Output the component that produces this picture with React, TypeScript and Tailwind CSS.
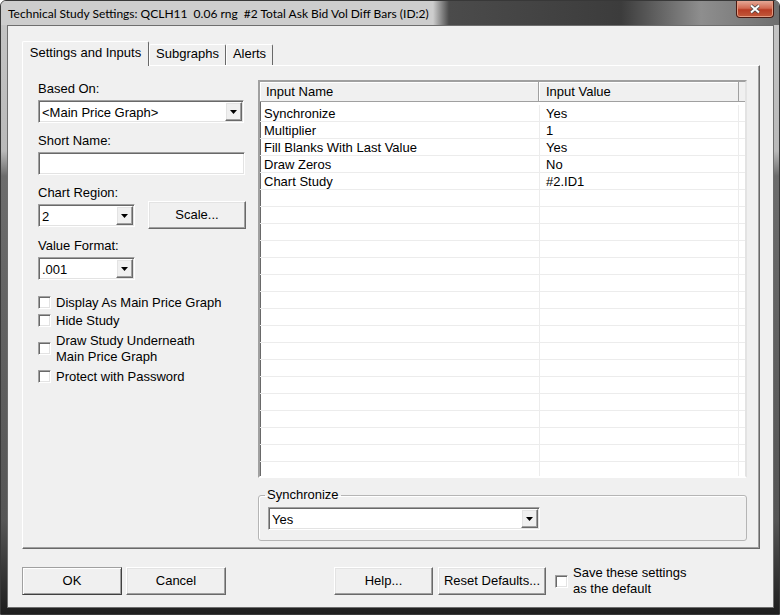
import React from 'react'

// Win classic 3D edges
const sunken =
  'border border-t-[#a0a0a0] border-l-[#a0a0a0] border-b-white border-r-white shadow-[inset_1px_1px_0_#696969,inset_-1px_-1px_0_#e3e3e3]'
const raised =
  'border border-t-white border-l-white border-b-[#696969] border-r-[#696969] shadow-[inset_-1px_-1px_0_#a0a0a0,inset_1px_1px_0_#e3e3e3]'

const rows: [string, string][] = [
  ['Synchronize', 'Yes'],
  ['Multiplier', '1'],
  ['Fill Blanks With Last Value', 'Yes'],
  ['Draw Zeros', 'No'],
  ['Chart Study', '#2.ID1'],
  ...Array.from({ length: 17 }, () => ['', ''] as [string, string]),
]

function Arrow() {
  return (
    <svg width="7" height="4" viewBox="0 0 7 4">
      <path d="M0 0h7L3.5 4z" fill="#000" />
    </svg>
  )
}

function Combo({ value, className }: { value: string; className: string }) {
  return (
    <div className={`flex h-[23px] bg-white p-px ${sunken} ${className}`}>
      <span className="flex-1 pl-[2px] pt-px leading-[19px] whitespace-nowrap">{value}</span>
      <span className={`flex w-[17px] items-center justify-center bg-[#f0f0f0] ${raised}`}>
        <Arrow />
      </span>
    </div>
  )
}

function Check() {
  return <span className={`block h-[13px] w-[13px] shrink-0 bg-white ${sunken}`} />
}

function CheckItem({ children, className }: { children: React.ReactNode; className: string }) {
  return (
    <div className={`flex items-center gap-[5px] leading-[16px] ${className}`}>
      <Check />
      <span className="pt-px">{children}</span>
    </div>
  )
}

function Button({ label, className }: { label: string; className: string }) {
  return (
    <div className={`flex h-[28px] items-center justify-center bg-[#f0f0f0] ${raised} ${className}`}>
      {label}
    </div>
  )
}

export default function App() {
  return (
    <div className="h-[615px] w-[780px] overflow-hidden rounded-t-[6px] border border-[#383838] bg-[linear-gradient(to_bottom,#c6c6c6_0px,#b9b9b9_150px,#6c6c6c_175px,#555555_520px,#1e1e1e_613px)] font-['Liberation_Sans',Arial,sans-serif] text-[13px] text-black">
      {/* title bar */}
      <div className="flex h-[24px] bg-[linear-gradient(to_right,#cdcdcd_0px,#cdcdcd_432px,#4b4b4b_448px,#3c3c3c_620px,#8e8e8e_700px,#6e6e6e_780px)]">
        <span className="flex-1 whitespace-pre pl-[7px] pt-[5px] font-['Lato','Noto_Sans',sans-serif] text-[12px] leading-[16px]">
          Technical Study Settings: QCLH11  0.06 rng  #2 Total Ask Bid Vol Diff Bars (ID:2)
        </span>
        <div className="mr-[5px] flex h-[17px] w-[38px] items-center justify-center rounded-b-[4px] border border-t-0 border-[#4a1a12] bg-[linear-gradient(to_bottom,#e6a896_0%,#d26a52_45%,#b83c24_55%,#c25a3c_100%)] shadow-[inset_0_-1px_0_#e49a80,inset_1px_0_0_#e49a80,inset_-1px_0_0_#e49a80]">
          <svg width="12" height="10" viewBox="0 0 12 10">
            <path d="M2 1.5 10 8.5M10 1.5 2 8.5" stroke="#4a4a4a" strokeWidth="3.6" />
            <path d="M2 1.5 10 8.5M10 1.5 2 8.5" stroke="#fff" strokeWidth="2" />
          </svg>
        </div>
      </div>

      {/* client area */}
      <div className="ml-[6px] h-[583px] w-[767px] border border-[#6e6e6e] bg-[#f0f0f0] pl-[14px] pt-[15px]">
        {/* tabs */}
        <div className="flex h-[24px] items-end">
          <div className="relative z-10 -mb-px flex h-[25px] w-[127px] justify-center rounded-t-[2px] border border-b-0 border-t-white border-l-white border-r-[#696969] bg-[#f0f0f0] pt-[3px] leading-[16px]">
            Settings and Inputs
          </div>
          <div className="flex h-[21px] w-[77px] justify-center rounded-t-[2px] border border-b-0 border-t-white border-l-white border-r-[#696969] bg-[#f0f0f0] pt-[1px] leading-[16px]">
            Subgraphs
          </div>
          <div className="flex h-[21px] w-[47px] justify-center rounded-t-[2px] border border-b-0 border-t-white border-l-white border-r-[#696969] bg-[#f0f0f0] pt-[1px] leading-[16px]">
            Alerts
          </div>
        </div>

        {/* tab panel */}
        <div className="flex h-[484px] w-[738px] gap-[12px] border border-t-white border-l-white border-b-[#696969] border-r-[#696969] pl-[15px] pt-[14px] shadow-[inset_-1px_-1px_0_#a0a0a0]">
          {/* left column */}
          <div className="flex w-[208px] flex-col leading-[16px]">
            <div className="pt-px">Based On:</div>
            <Combo value="<Main Price Graph>" className="mt-[3px] w-[206px]" />
            <div className="mt-[9px] pt-px">Short Name:</div>
            <div className={`mt-[3px] h-[23px] w-[207px] bg-white ${sunken}`} />
            <div className="mt-[9px] pt-px">Chart Region:</div>
            <div className="flex items-start">
              <Combo value="2" className="mt-[3px] w-[97px]" />
              <Button label="Scale..." className="ml-[13px] w-[98px]" />
            </div>
            <div className="mt-[8px] pt-px">Value Format:</div>
            <Combo value=".001" className="mt-[3px] w-[97px]" />
            <CheckItem className="mt-[14px]">Display As Main Price Graph</CheckItem>
            <CheckItem className="mt-[1px]">Hide Study</CheckItem>
            <CheckItem className="mt-[3px]">
              Draw Study Underneath
              <br />
              Main Price Graph
            </CheckItem>
            <CheckItem className="mt-[3px]">Protect with Password</CheckItem>
          </div>

          {/* right column */}
          <div className="flex w-[489px] flex-col">
            <div className="h-[398px] overflow-hidden border-2 border-t-[#a0a0a0] border-l-[#a0a0a0] border-b-white border-r-[#e3e3e3] bg-white shadow-[inset_1px_1px_0_#696969]">
              <div className="flex h-[20px] leading-[20px]">
                <div className="w-[279px] border-r border-b border-[#a0a0a0] bg-[#f0f0f0] pl-[6px] shadow-[inset_1px_1px_0_#fff]">
                  Input Name
                </div>
                <div className="w-[200px] border-r border-b border-[#a0a0a0] bg-[#f0f0f0] pl-[7px] shadow-[inset_1px_1px_0_#fff]">
                  Input Value
                </div>
                <div className="flex-1 border-b border-[#a0a0a0] bg-[#f0f0f0]" />
              </div>
              <div className="pt-[3px]">
                {rows.map(([name, value], i) => (
                  <div key={i} className="flex h-[17px] border-b border-[#ececec] leading-[17px]">
                    <div className="w-[280px] border-r border-[#ececec] pl-[4px] whitespace-nowrap">{name}</div>
                    <div className="w-[199px] border-r border-[#ececec] pl-[6px]">{value}</div>
                    <div className="flex-1" />
                  </div>
                ))}
              </div>
            </div>

            <fieldset className="mt-[9px] rounded-[3px] border border-[#b5b5b5] pb-[10px] shadow-[inset_1px_1px_0_#fff]">
              <legend className="ml-[6px] px-[2px] leading-[16px]">Synchronize</legend>
              <Combo value="Yes" className="ml-[9px] mt-[4px] w-[272px]" />
            </fieldset>
          </div>
        </div>

        {/* bottom buttons */}
        <div className="mt-[16px] flex items-center">
          <div className="flex h-[28px] w-[100px] items-center justify-center border border-t-[#a0a0a0] border-l-[#a0a0a0] border-b-[#404040] border-r-[#404040] bg-[#f0f0f0] shadow-[inset_1px_1px_0_#fff,inset_-1px_-1px_0_#a0a0a0]">
            OK
          </div>
          <Button label="Cancel" className="ml-[4px] w-[100px]" />
          <Button label="Help..." className="ml-[108px] w-[99px]" />
          <Button label="Reset Defaults..." className="ml-[5px] w-[108px]" />
          <div className="ml-[9px] flex items-center gap-[5px] leading-[16px]">
            <Check />
            <span>
              Save these settings
              <br />
              as the default
            </span>
          </div>
        </div>
      </div>
    </div>
  )
}
